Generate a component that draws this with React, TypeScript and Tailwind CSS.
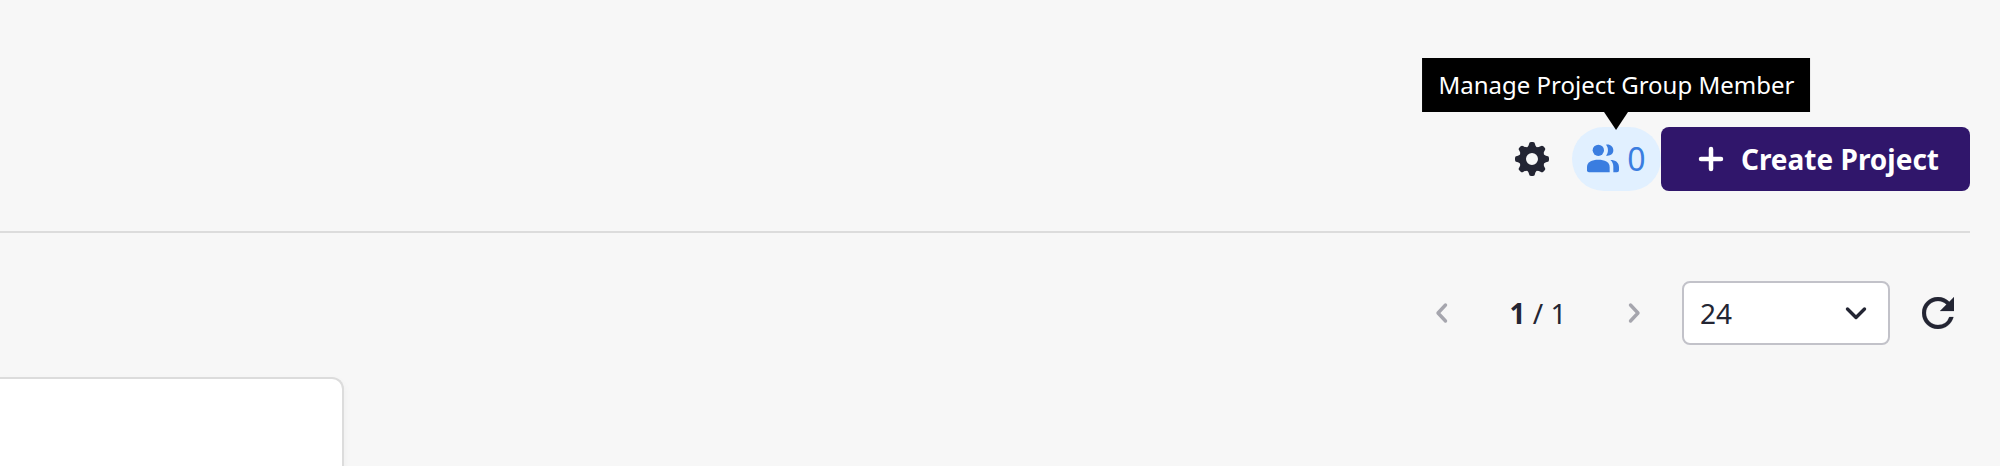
const teeth = [0, 45, 90, 135, 180, 225, 270, 315];

function GearIcon() {
  return (
    <svg viewBox="-18 -18 36 36" className="size-9" aria-hidden="true">
      <circle r="9.4" fill="none" stroke="currentColor" strokeWidth="6.8" />
      {teeth.map((angle) => (
        <path
          key={angle}
          transform={`rotate(${angle})`}
          d="M-5 -11.5C-4 -12.4 -3.2 -13.6 -3 -15Q-2.8 -17 -1 -17H1Q2.8 -17 3 -15C3.2 -13.6 4 -12.4 5 -11.5Z"
          fill="currentColor"
        />
      ))}
    </svg>
  );
}

function PeopleIcon() {
  return (
    <svg viewBox="84 100 96 96" className="size-8" fill="currentColor" aria-hidden="true">
      <circle cx="118" cy="122" r="17" />
      <path d="M84 172C84 157 99 150 118 150S152 157 152 172V188H90Q84 188 84 182Z" />
      <path d="M141 105C154 103 163 111 163 122S154 140 141 138C149 129 149 114 141 105Z" />
      <path d="M154 151C170 151 180 159 180 172V182Q180 188 174 188H163V172C163 163 160 156 154 151Z" />
    </svg>
  );
}

function PlusIcon() {
  return (
    <svg viewBox="0 0 32 32" className="size-8" fill="none" stroke="currentColor" strokeWidth="4.5" strokeLinecap="round" aria-hidden="true">
      <path d="M16 6V26M6 16H26" />
    </svg>
  );
}

function Chevron({ d }: { d: string }) {
  return (
    <svg viewBox="0 0 24 24" className="size-6" fill="none" stroke="currentColor" strokeWidth="3.4" strokeLinecap="round" strokeLinejoin="round" aria-hidden="true">
      <path d={d} />
    </svg>
  );
}

function RefreshIcon() {
  return (
    <svg viewBox="4 4 16 16" className="size-8" fill="currentColor" stroke="currentColor" strokeWidth="0.1" aria-hidden="true">
      <path d="M17.65 6.35A7.958 7.958 0 0 0 12 4c-4.42 0-7.99 3.58-7.99 8s3.57 8 7.99 8c3.73 0 6.84-2.55 7.73-6h-2.08A5.99 5.99 0 0 1 12 18c-3.31 0-6-2.69-6-6s2.69-6 6-6c1.66 0 3.14.69 4.22 1.78L13 11h7V4l-2.35 2.35z" />
    </svg>
  );
}

export default function App() {
  return (
    <div className="flex min-h-screen flex-col bg-[#f7f7f7] pr-[30px] font-['Noto_Sans',sans-serif] text-[28px] leading-10 text-[#232533]">
      <header className="flex items-center justify-end border-b-2 border-[#dcdcdc] pt-[127px] pb-10">
        <button type="button" aria-label="Settings" className="mr-2 flex size-16 items-center justify-center">
          <GearIcon />
        </button>
        <div className="relative">
          <button
            type="button"
            aria-describedby="member-tip"
            className="flex h-16 w-[89px] items-center justify-center gap-2 rounded-full bg-[#e1f0ff] text-[32px] text-[#3a7de0]"
          >
            <PeopleIcon />
            0
          </button>
          <div
            id="member-tip"
            role="tooltip"
            className="absolute bottom-full left-1/2 mb-[15px] -translate-x-1/2 bg-black px-4 py-[11px] text-2xl leading-8 whitespace-nowrap text-white"
          >
            Manage Project Group Member
            <svg viewBox="0 0 24 18" className="absolute top-full left-1/2 h-[18px] w-6 -translate-x-1/2" aria-hidden="true">
              <path d="M0 0H24L12 18Z" fill="#000" />
            </svg>
          </div>
        </div>
        <button type="button" className="flex h-16 items-center gap-[14px] rounded-lg bg-[#30166b] pr-[31px] pl-[34px] font-bold text-white">
          <PlusIcon />
          Create Project
        </button>
      </header>

      <div className="flex items-center justify-end pt-12 pb-8">
        <button type="button" aria-label="Previous page" className="flex size-16 items-center justify-center text-[#a6a6ae]">
          <Chevron d="M15.5 4L8 12L15.5 20" />
        </button>
        <p className="w-32 text-center">
          <b>1</b> / 1
        </p>
        <button type="button" aria-label="Next page" className="flex size-16 items-center justify-center text-[#a6a6ae]">
          <Chevron d="M8.5 4L16 12L8.5 20" />
        </button>
        <div className="relative ml-4">
          <select
            aria-label="Items per page"
            defaultValue="24"
            className="h-16 w-52 appearance-none rounded-lg border-2 border-[#c2c2c9] bg-white px-4"
          >
            <option>12</option>
            <option>24</option>
            <option>36</option>
          </select>
          <span className="pointer-events-none absolute inset-y-0 right-[22px] flex items-center">
            <Chevron d="M3.5 8L12 16.5L20.5 8" />
          </span>
        </div>
        <button type="button" aria-label="Refresh" className="ml-4 flex size-16 items-center justify-center">
          <RefreshIcon />
        </button>
      </div>

      <main className="flex flex-1">
        <article className="w-[344px] rounded-tr-xl border-t-2 border-r-2 border-[#dcdcdc] bg-white shadow-[0_4px_8px_rgba(0,0,0,0.05)]" />
      </main>
    </div>
  );
}
